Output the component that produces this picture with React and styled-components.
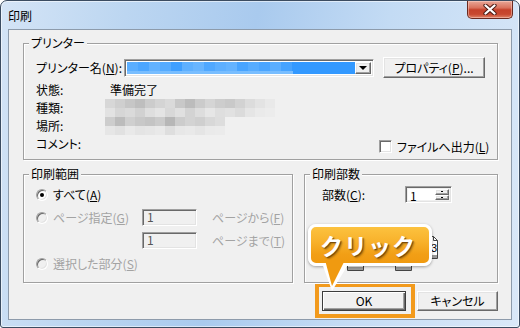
import React from 'react';
import styled, { createGlobalStyle, css } from 'styled-components';

const Global = createGlobalStyle`
  *, *::before, *::after { box-sizing: border-box; }
  html, body { margin: 0; padding: 0; background: #fff; }
  body {
    font-family: "Noto Sans CJK JP", "Noto Sans", sans-serif;
    font-size: 12px;
    color: #000;
    font-feature-settings: "palt";
  }
  #root { width: 520px; height: 328px; }
`;

const sunken = css`
  border: 1px solid;
  border-color: #a0a0a0 #fff #fff #a0a0a0;
  box-shadow: inset 1px 1px 0 #696969, inset -1px -1px 0 #e3e3e3;
`;

const raised = css`
  border: 1px solid;
  border-color: #fff #696969 #696969 #fff;
  box-shadow: inset -1px -1px 0 #a0a0a0, inset 1px 1px 0 #e3e3e3;
`;

const Window = styled.div`
  width: 520px;
  height: 328px;
  border: 1px solid #3b4c61;
  border-radius: 7px 7px 3px 3px;
  background: linear-gradient(100deg, #d4e4f6 0%, #bcd6f1 22%, #a9caee 45%, #c3dbf4 68%, #dae8f8 100%);
  box-shadow: inset 0 0 0 1px rgba(255, 255, 255, 0.55);
  display: flex;
  flex-direction: column;
  padding: 0 7px 7px 7px;
  overflow: hidden;
`;

const TitleBar = styled.div`
  height: 28px;
  flex: none;
  display: flex;
  justify-content: space-between;
  align-items: flex-start;
`;

const Title = styled.span`
  padding-top: 8px;
  line-height: 14px;
  font-size: 12px;
  color: #000;
`;

const CloseButton = styled.div`
  width: 46px;
  height: 18px;
  margin-right: -1px;
  border: 1px solid #6a2a20;
  border-top: none;
  border-radius: 0 0 5px 5px;
  background: linear-gradient(#e8a797 0%, #d9725d 40%, #c5412a 52%, #c8482f 78%, #df8367 100%);
  box-shadow: inset 0 0 0 1px rgba(255, 220, 210, 0.45);
  display: flex;
  align-items: center;
  justify-content: center;
`;

const Client = styled.div`
  flex: 1;
  position: relative;
  background: #f0f0f0;
  border: 1px solid #8d9bab;
  padding: 13px 13px 0 14px;
  display: flex;
  flex-direction: column;
`;

const Group = styled.div`
  position: relative;
  flex: none;
  border: 1px solid #a0a0a0;
  box-shadow: inset 1px 1px 0 #fff, 1px 1px 0 #fff;
  width: ${(p) => (p.$w ? `${p.$w}px` : 'auto')};
  height: ${(p) => p.$h}px;
  padding: ${(p) => p.$pad};
`;

const Legend = styled.span`
  position: absolute;
  top: -8px;
  left: 5px;
  padding: 0 2px;
  line-height: 14px;
  background: #f0f0f0;
  white-space: nowrap;
`;

const Label = styled.span`
  line-height: 14px;
  white-space: nowrap;
  color: ${(p) => (p.$disabled ? '#a3a3a3' : '#000')};
  width: ${(p) => (p.$w ? `${p.$w}px` : 'auto')};
  flex: none;
`;

const PrinterRow = styled.div`
  display: flex;
  align-items: center;
  height: 21px;
`;

const Dropdown = styled.div`
  ${sunken};
  width: 251px;
  height: 18px;
  padding: 2px 2px 2px 2px;
  background: #fff;
  display: flex;
`;

const Selection = styled.div`
  flex: 1;
  background: #3399ff;
  display: flex;
  flex-direction: column;
  overflow: hidden;
`;

const MosaicRow = styled.div`
  display: flex;
  height: ${(p) => p.$h}px;
`;

const Cell = styled.div`
  flex: none;
  width: ${(p) => p.$w}px;
  height: 100%;
  background: ${(p) => p.$c};
`;

const ArrowButton = styled.div`
  ${raised};
  width: 16px;
  background: #f0f0f0;
  display: flex;
  align-items: center;
  justify-content: center;
`;

const Arrow = styled.div`
  width: 0;
  height: 0;
  border-left: 4px solid transparent;
  border-right: 4px solid transparent;
  border-top: 4px solid #000;
  margin-top: 1px;
`;

const Button = styled.div`
  ${raised};
  ${(p) =>
    p.$default &&
    css`
      border: 1px solid #3c3c3c;
      box-shadow: inset 1px 1px 0 #fff, inset -1px -1px 0 #696969, inset -2px -2px 0 #a0a0a0;
    `}
  width: ${(p) => p.$w}px;
  height: ${(p) => p.$h || 20}px;
  margin-left: ${(p) => p.$ml || 0}px;
  background: #f0f0f0;
  display: flex;
  align-items: center;
  justify-content: center;
  line-height: 14px;
  white-space: nowrap;
  flex: none;
`;

const InfoGrid = styled.div`
  margin-top: 3px;
  display: grid;
  grid-template-columns: 74px 1fr;
  grid-auto-rows: 18px;
  align-items: center;
`;

const Blur = styled.div`
  margin-left: -5px;
  display: flex;
  flex-direction: column;
  width: ${(p) => p.$w}px;
  align-self: ${(p) => p.$align || 'center'};
`;

const CheckWrap = styled.div`
  display: flex;
  align-items: center;
  gap: 5px;
  margin-left: 269px;
  margin-top: 5px;
`;

const CheckBox = styled.div`
  ${sunken};
  width: 13px;
  height: 13px;
  background: #fff;
  flex: none;
`;

const Row2 = styled.div`
  margin-top: 14px;
  display: flex;
  gap: 11px;
`;

const RangeGrid = styled.div`
  display: grid;
  grid-template-columns: 106px 70px 1fr;
  grid-auto-rows: 23px;
  align-items: center;
`;

const RadioLine = styled.div`
  display: flex;
  align-items: center;
  gap: 5px;
  grid-column: ${(p) => (p.$span ? '1 / -1' : 'auto')};
`;

const Radio = styled.div`
  width: 12px;
  height: 12px;
  border-radius: 50%;
  border: 1px solid;
  border-color: #a0a0a0 #fff #fff #a0a0a0;
  box-shadow: inset 1px 1px 0 #696969, inset -1px -1px 0 #e3e3e3;
  background: ${(p) => (p.$disabled ? '#f0f0f0' : '#fff')};
  display: flex;
  align-items: center;
  justify-content: center;
  flex: none;
  &::after {
    content: '';
    display: ${(p) => (p.$checked ? 'block' : 'none')};
    width: 4px;
    height: 4px;
    border-radius: 50%;
    background: #000;
  }
`;

const TextBox = styled.div`
  ${sunken};
  width: 55px;
  height: 17px;
  background: #f0f0f0;
  padding-left: 4px;
  line-height: 14px;
  color: #555;
`;

const CopiesRow = styled.div`
  display: flex;
  align-items: center;
  height: 23px;
`;

const Spin = styled.div`
  ${sunken};
  width: 47px;
  height: 17px;
  display: flex;
  padding: 2px;
  background: #f0f0f0;
`;

const SpinField = styled.div`
  flex: 1;
  background: #fff;
  line-height: 13px;
  padding-left: 2px;
`;

const SpinButtons = styled.div`
  width: 14px;
  display: flex;
  flex-direction: column;
`;

const SpinBtn = styled.div`
  ${raised};
  flex: 1;
  background: #f0f0f0;
  display: flex;
  align-items: center;
  justify-content: center;
  &::after {
    content: '';
    width: 2px;
    height: 1px;
    background: #000;
  }
`;

const CollateIcon = styled.svg`
  display: block;
  margin: 20px 0 0 18px;
`;

const ButtonRow = styled.div`
  display: flex;
  justify-content: flex-end;
  align-items: center;
`;

const Highlight = styled.div`
  width: 100px;
  border: 4px solid #f29a1c;
  padding: 4px 5px 3px 3px;
`;

const Callout = styled.div`
  position: absolute;
  left: 299px;
  top: 194px;
  width: 124px;
  height: 42px;
  border: 3px solid #fff;
  border-radius: 8px;
  background: linear-gradient(#fcc23f 0%, #f8b22c 40%, #f29f16 75%, #f09a10 100%);
  box-shadow: 0 1px 3px rgba(0, 0, 0, 0.35);
  display: flex;
  align-items: center;
  padding-left: 9px;
  font-weight: 700;
  font-size: 23px;
  letter-spacing: 1px;
  color: #fff;
  text-shadow: 1px 1px 1px rgba(90, 50, 0, 0.75), 2px 2px 2px rgba(0, 0, 0, 0.25);
  font-feature-settings: normal;
  line-height: 1;
`;

const Tail = styled.svg`
  position: absolute;
  left: 313px;
  top: 230px;
  overflow: visible;
`;

const kindRows = [
  ['#d7d7d7', '#cfcfcf', '#c6c6c6', '#bebebe', '#cccccc', '#d4d4d4', '#dadada', '#c8c8c8', '#bcbcbc', '#cbcbcb', '#d5d5d5', '#cdcdcd', '#c9c9c9', '#d2d2d2', '#dcdcdc', '#e3e3e3', '#e9e9e9'],
  ['#e2e2e2', '#d6d6d6', '#dadada', '#d1d1d1', '#dedede', '#e4e4e4', '#d8d8d8', '#e0e0e0', '#d3d3d3', '#dddddd', '#e6e6e6', '#dedede', '#e1e1e1', '#dbdbdb', '#e5e5e5', '#eaeaea', '#ececec'],
];
const placeRows = [
  ['#cdcdcd', '#bcbcbc', '#cfcfcf', '#c8c8c8', '#c4c4c4', '#cbcbcb', '#b7b7b7', '#cccccc', '#d3d3d3', '#cfcfcf', '#d8d8d8', '#dddddd'],
  ['#e6e6e6', '#e1e1e1', '#e9e9e9', '#e4e4e4', '#e6e6e6', '#e9e9e9', '#dedede', '#e7e7e7', '#e9e9e9', '#e5e5e5', '#eaeaea', '#ebebeb'],
];
const blueTop = ['#5aaeff', '#4ca6ff', '#62b2ff', '#55abff', '#3f9fff', '#5eb0ff', '#68b5ff', '#50a8ff', '#5dafff', '#64b3ff', '#48a4ff', '#56acff', '#4ba5ff', '#5baeff', '#46a3ff'];

function Mosaic({ rows, cellW, rowH }) {
  return rows.map((r, i) => (
    <MosaicRow key={i} $h={rowH}>
      {r.map((c, j) => (
        <Cell key={j} $w={cellW} $c={c} />
      ))}
    </MosaicRow>
  ));
}

function Page({ x, y, n }) {
  return (
    <g>
      <path d={`M${x + 0.5} ${y + 0.5} H${x + 12.5} L${x + 16.5} ${y + 4.5} V${y + 22.5} H${x + 0.5} Z`} fill="#fff" stroke="#444" />
      <path d={`M${x + 12.5} ${y + 0.5} V${y + 4.5} H${x + 16.5}`} fill="none" stroke="#444" />
      <rect x={x + 1} y={y + 19} width={15} height={3} fill="#9a9a9a" />
      {n && (
        <text x={x + 10} y={y + 16} fontSize="11" fontFamily="Liberation Sans, sans-serif" fill="#000">
          {n}
        </text>
      )}
    </g>
  );
}

export default function App() {
  return (
    <>
      <Global />
      <Window>
        <TitleBar>
          <Title>印刷</Title>
          <CloseButton>
            <svg width="14" height="11" viewBox="0 0 14 11">
              <path d="M2.5 1.5 L11.5 9.5 M11.5 1.5 L2.5 9.5" stroke="#4a1a12" strokeWidth="4.2" strokeLinecap="round" />
              <path d="M2.5 1.5 L11.5 9.5 M11.5 1.5 L2.5 9.5" stroke="#fff" strokeWidth="2.3" strokeLinecap="round" />
            </svg>
          </CloseButton>
        </TitleBar>
        <Client>
          <Group $h={117} $pad="13px 12px 0 12px">
            <Legend>プリンター</Legend>
            <PrinterRow>
              <Label $w={88}>
                プリンター名(<u>N</u>):
              </Label>
              <Dropdown>
                <Selection>
                  <MosaicRow $h={10}>
                    {blueTop.map((c, j) => (
                      <Cell key={j} $w={11} $c={c} />
                    ))}
                  </MosaicRow>
                  <MosaicRow $h={3}>
                    <Cell $w={166} $c="#79beff" />
                  </MosaicRow>
                </Selection>
                <ArrowButton>
                  <Arrow />
                </ArrowButton>
              </Dropdown>
              <Button $w={102} $h={21} $ml={9}>
                プロパティ(<u>P</u>)...
              </Button>
            </PrinterRow>
            <InfoGrid>
              <Label>状態:</Label>
              <Label>準備完了</Label>
              <Label>種類:</Label>
              <Blur $w={165} $align="end">
                <Mosaic rows={kindRows} cellW={10} rowH={9} />
              </Blur>
              <Label>場所:</Label>
              <Blur $w={116} $align="start">
                <Mosaic rows={placeRows} cellW={10} rowH={9} />
              </Blur>
              <Label>コメント:</Label>
              <CheckWrap>
                <CheckBox />
                <Label>
                  ファイルへ出力(<u>L</u>)
                </Label>
              </CheckWrap>
            </InfoGrid>
          </Group>
          <Row2>
            <Group $w={270} $h={109} $pad="8px 0 0 12px">
              <Legend>印刷範囲</Legend>
              <RangeGrid>
                <RadioLine $span>
                  <Radio $checked />
                  <Label>
                    すべて(<u>A</u>)
                  </Label>
                </RadioLine>
                <RadioLine>
                  <Radio $disabled />
                  <Label $disabled>
                    ページ指定(<u>G</u>)
                  </Label>
                </RadioLine>
                <TextBox>1</TextBox>
                <Label $disabled>
                  ページから(<u>F</u>)
                </Label>
                <span />
                <TextBox>1</TextBox>
                <Label $disabled>
                  ページまで(<u>T</u>)
                </Label>
                <RadioLine $span>
                  <Radio $disabled />
                  <Label $disabled>
                    選択した部分(<u>S</u>)
                  </Label>
                </RadioLine>
              </RangeGrid>
            </Group>
            <Group $w={194} $h={109} $pad="8px 0 0 17px">
              <Legend>印刷部数</Legend>
              <CopiesRow>
                <Label $w={83}>
                  部数(<u>C</u>):
                </Label>
                <Spin>
                  <SpinField>1</SpinField>
                  <SpinButtons>
                    <SpinBtn />
                    <SpinBtn />
                  </SpinButtons>
                </Spin>
              </CopiesRow>
              <CollateIcon width="100" height="46" viewBox="0 0 100 46">
                {[0, 48].map((ox) => (
                  <g key={ox}>
                    <Page x={ox + 33} y={10} n={ox ? '3' : null} />
                    <Page x={ox + 20} y={16} />
                    <Page x={ox + 7} y={22} />
                  </g>
                ))}
              </CollateIcon>
            </Group>
          </Row2>
          <ButtonRow>
            <Highlight>
              <Button $w={84} $default>
                OK
              </Button>
            </Highlight>
            <Button $w={81} $ml={2}>
              キャンセル
            </Button>
          </ButtonRow>
          <Callout>クリック</Callout>
          <Tail width="28" height="32" viewBox="0 0 28 32">
            <polygon points="0,3 27,3 10,31" fill="#fff" />
            <polygon points="3,0 23,0 10,26" fill="#f09a10" />
          </Tail>
        </Client>
      </Window>
    </>
  );
}
